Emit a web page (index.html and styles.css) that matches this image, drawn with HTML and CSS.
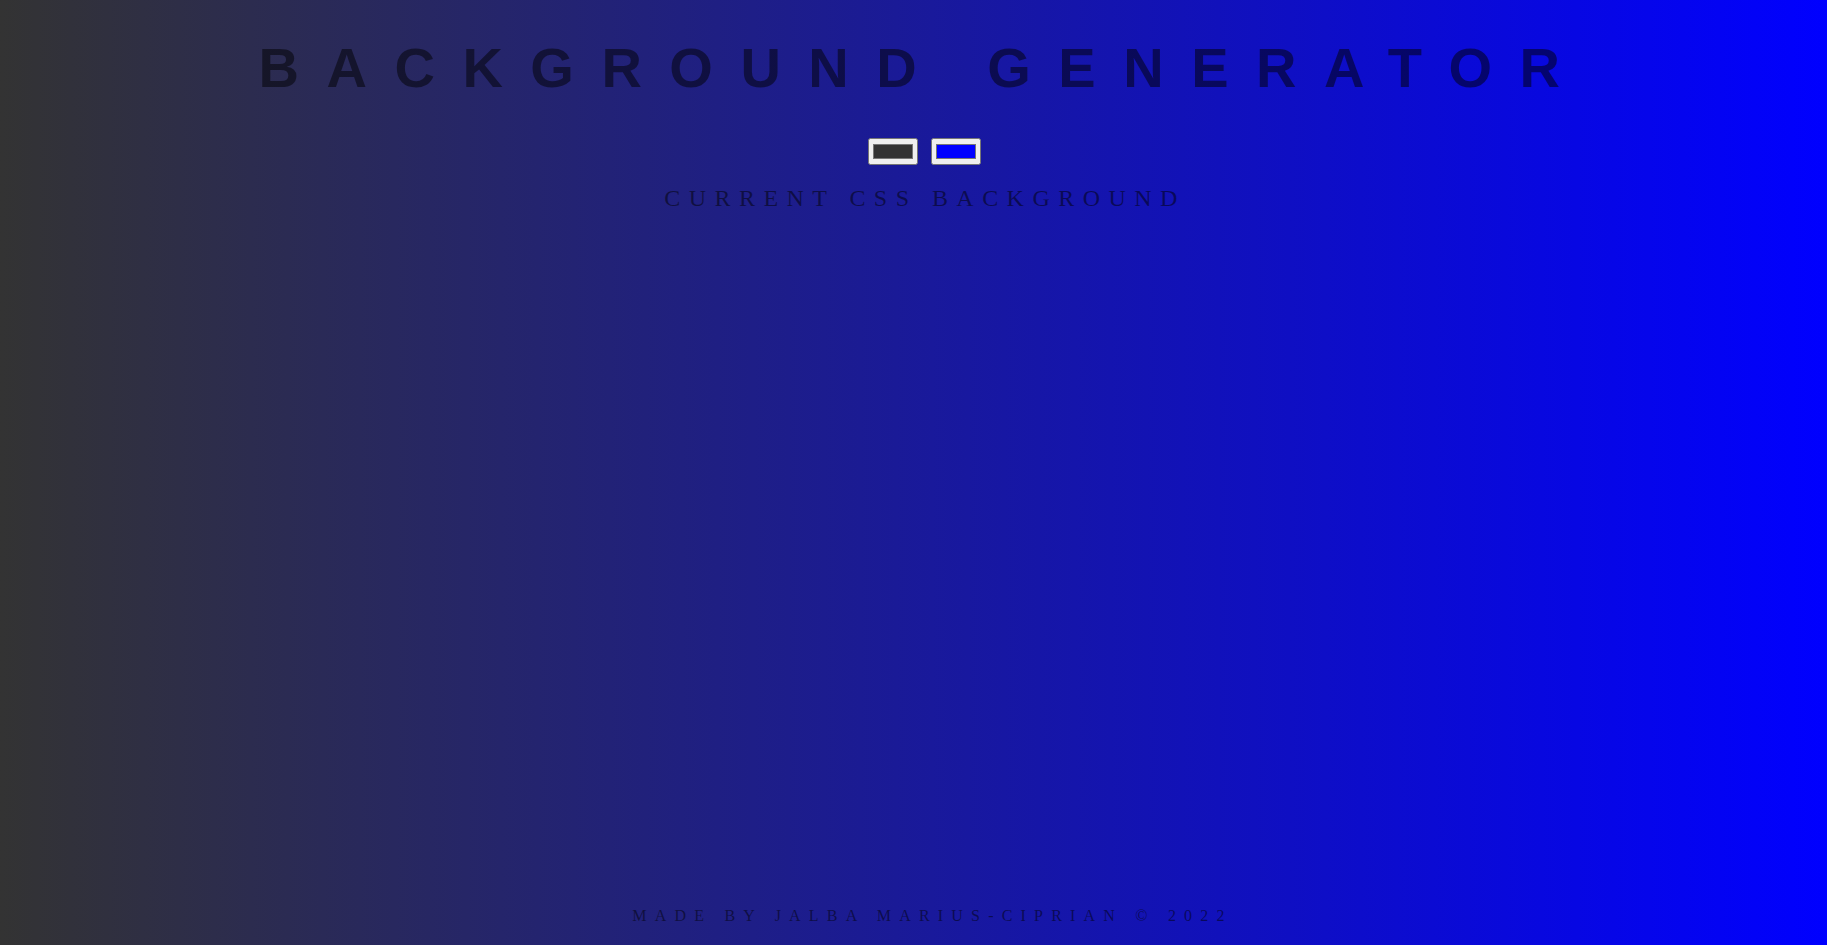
FILE: index.html
```html
<!DOCTYPE html>
<html lang="en">
<head>
<meta charset="utf-8">
<title>Background Generator</title>
<link rel="stylesheet" href="styles.css">
</head>
<body class="page">
  <h1 class="title">Background Generator</h1>
  <div class="pickers">
    <input class="color1" type="color" name="color1" value="#333333">
    <input class="color2" type="color" name="color2" value="#0000ff">
  </div>
  <h2 class="subtitle">Current CSS Background</h2>
  <footer class="footer">Made by Jalba Marius-Ciprian © 2022</footer>
</body>
</html>
```

FILE: styles.css
```css
html {
  height: 100%;
}

.page {
  margin: 0;
  min-height: 100vh;
  box-sizing: border-box;
  padding-left: 19px;
  display: flex;
  flex-direction: column;
  align-items: stretch;
  background: linear-gradient(to right, #333333, #0000ff);
  font-family: "Liberation Serif", "Times New Roman", serif;
  color: rgba(0, 0, 0, 0.5);
  text-align: center;
  text-transform: uppercase;
}

.title {
  margin: 35px 0 0;
  font-family: "Liberation Sans", Arial, sans-serif;
  font-size: 56px;
  font-weight: bold;
  line-height: normal;
  letter-spacing: 27.5px;
}

.pickers {
  margin-top: 38px;
  padding-left: 2px;
  display: flex;
  justify-content: center;
  gap: 13px;
}

.pickers input {
  margin: 0;
  width: 50px;
  height: 27px;
}

.subtitle {
  margin: 20px 0 0;
  padding-left: 4px;
  font-size: 24px;
  font-weight: normal;
  line-height: normal;
  letter-spacing: 8.45px;
}

.footer {
  margin-top: auto;
  padding: 0 0 20px 19px;
  font-size: 16px;
  line-height: normal;
  letter-spacing: 8.2px;
}
```
